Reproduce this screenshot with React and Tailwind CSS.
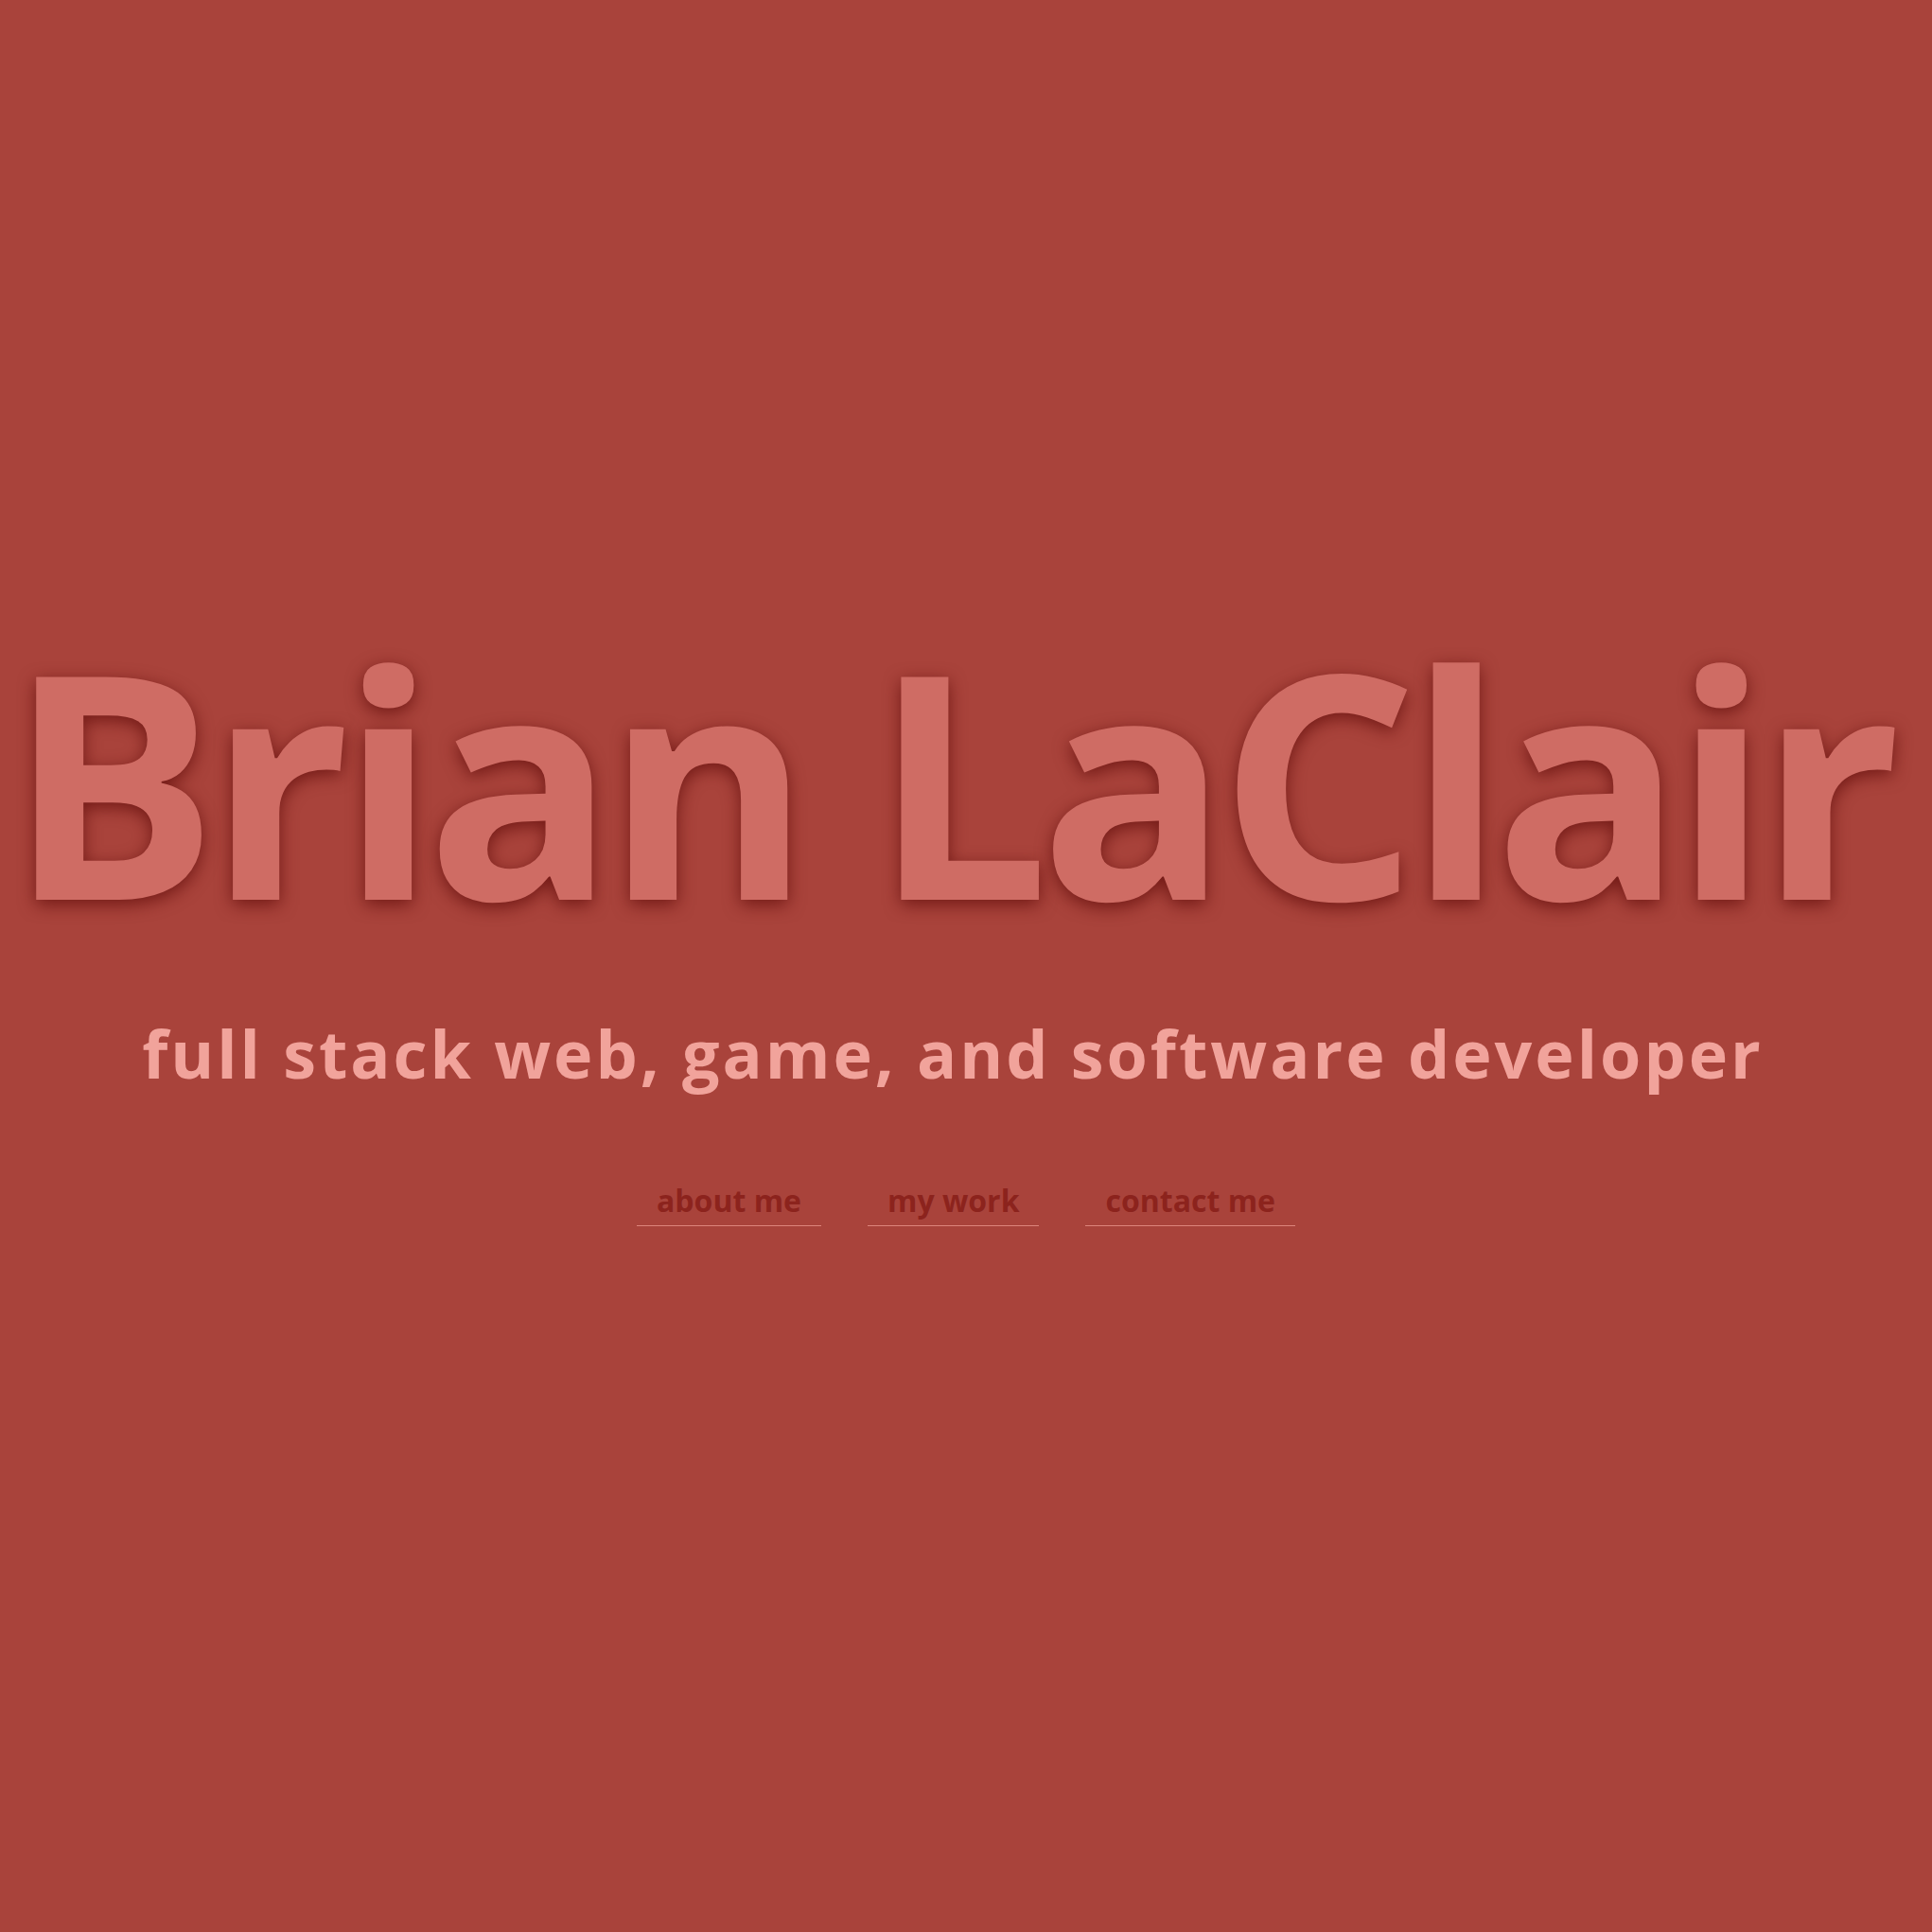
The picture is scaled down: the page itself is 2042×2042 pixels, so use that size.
import React from 'react';

const links = ['about me', 'my work', 'contact me'];

export default function App() {
  return (
    <main className="min-h-screen w-full bg-[#a9433b] flex flex-col items-center pt-[658px] font-['Open_Sans',sans-serif]">
      {/* Name */}
      <h1 className="mr-[34px] text-[330px] leading-[1] font-bold tracking-[-10px] text-[#cf6c64] whitespace-nowrap [text-shadow:0_5px_18px_rgba(100,15,12,0.8)]">
        Brian LaClair
      </h1>

      {/* Tagline */}
      <p className="mt-[90px] mr-[28px] text-[70px] leading-[1] font-bold tracking-[3px] text-[#f1a39b] whitespace-nowrap">
        full stack web, game, and software developer
      </p>

      {/* Nav */}
      <nav className="mt-[102px] flex items-center gap-[49px]">
        {links.map((label) => (
          <a
            key={label}
            href="#"
            className="px-[21px] pb-[7px] border-b border-[#dd857c] text-[32px] leading-[1.2] font-bold text-[#8c231d]"
          >
            {label}
          </a>
        ))}
      </nav>
    </main>
  );
}
